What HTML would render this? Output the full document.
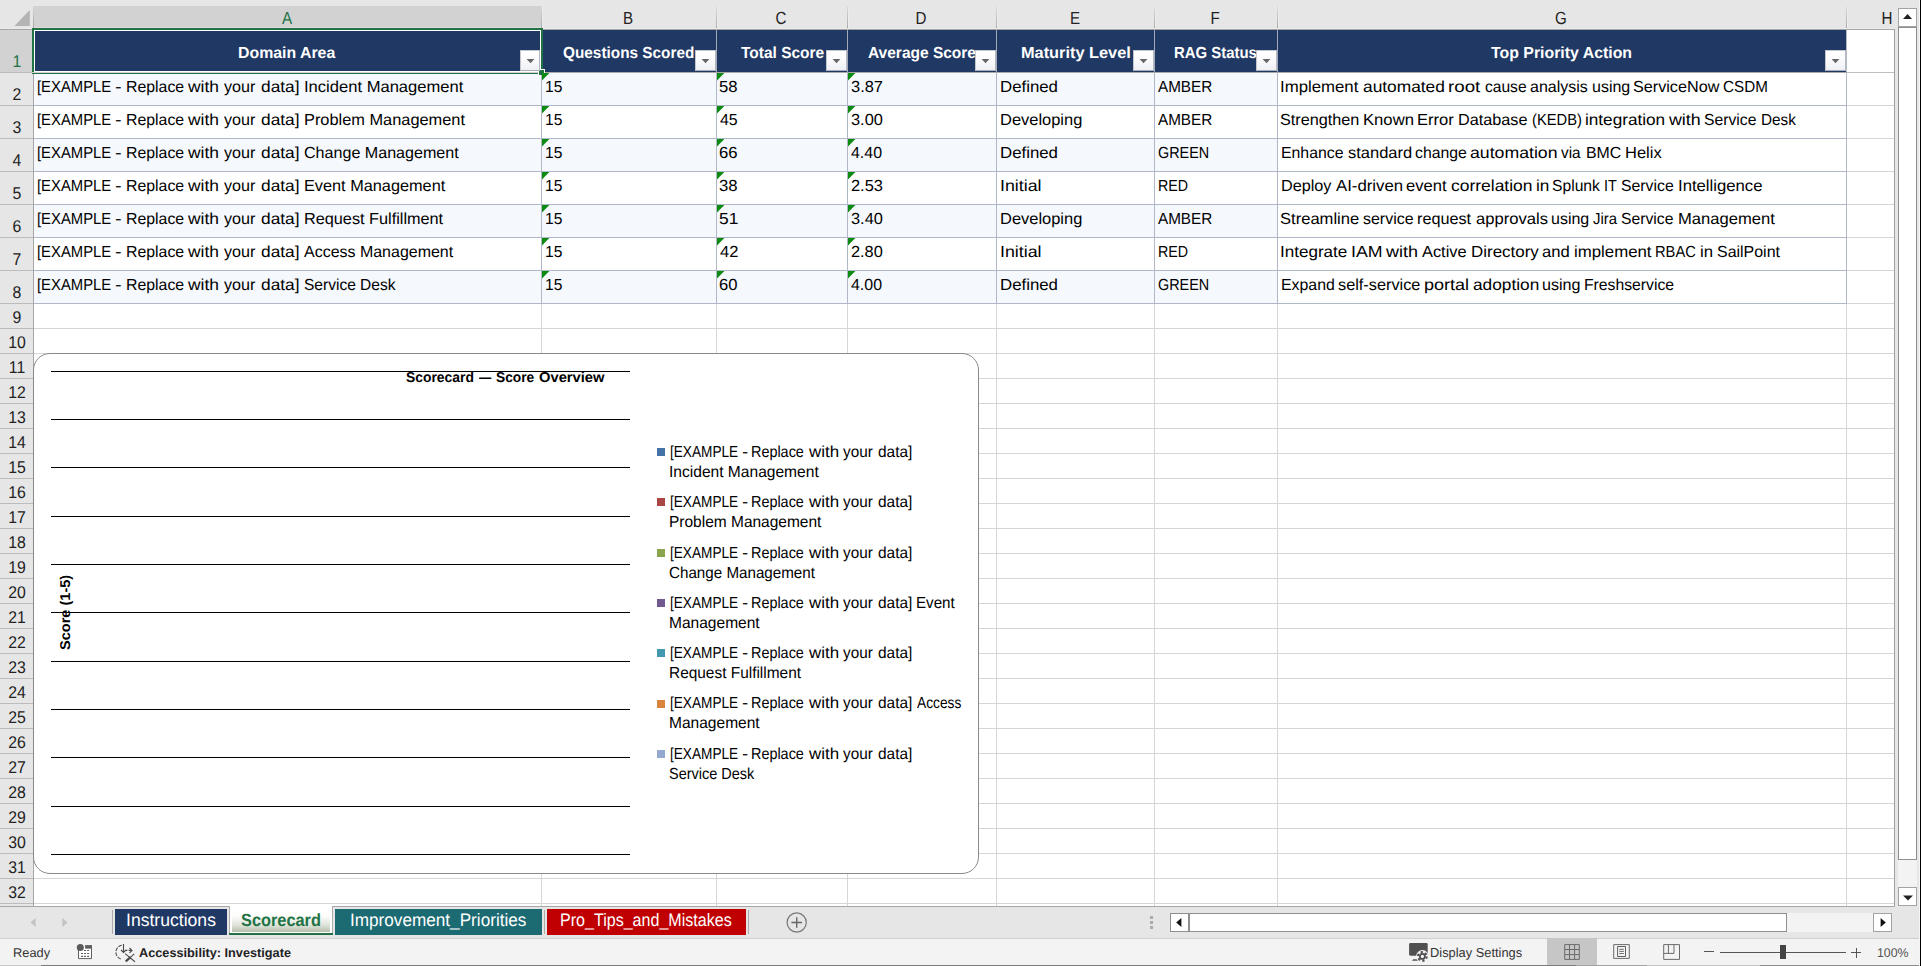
<!DOCTYPE html>
<html lang="en"><head><meta charset="utf-8"><title>Scorecard</title>
<style>
html,body{margin:0;padding:0;}
body{width:1921px;height:966px;overflow:hidden;position:relative;background:#fff;font-family:"Liberation Sans", sans-serif;}
body>div,body>svg,body>span{position:absolute;display:block;}
.t{white-space:nowrap;line-height:1;text-rendering:geometricPrecision;}
</style></head>
<body>
<div style="left:0px;top:0px;width:1921px;height:966px;background:#ffffff;"></div>
<div style="left:0px;top:0px;width:1921px;height:28px;background:#e6e6e6;"></div>
<div style="left:0px;top:28px;width:33px;height:878px;background:#e6e6e6;"></div>
<div style="left:1895px;top:0px;width:26px;height:907px;background:#e6e6e6;"></div>
<div style="left:541px;top:30px;width:1px;height:876px;background:#d6d6d6;"></div>
<div style="left:716px;top:30px;width:1px;height:876px;background:#d6d6d6;"></div>
<div style="left:847px;top:30px;width:1px;height:876px;background:#d6d6d6;"></div>
<div style="left:996px;top:30px;width:1px;height:876px;background:#d6d6d6;"></div>
<div style="left:1154px;top:30px;width:1px;height:876px;background:#d6d6d6;"></div>
<div style="left:1277px;top:30px;width:1px;height:876px;background:#d6d6d6;"></div>
<div style="left:1846px;top:30px;width:1px;height:876px;background:#d6d6d6;"></div>
<div style="left:34px;top:72px;width:1860px;height:1px;background:#d6d6d6;"></div>
<div style="left:34px;top:105px;width:1860px;height:1px;background:#d6d6d6;"></div>
<div style="left:34px;top:138px;width:1860px;height:1px;background:#d6d6d6;"></div>
<div style="left:34px;top:171px;width:1860px;height:1px;background:#d6d6d6;"></div>
<div style="left:34px;top:204px;width:1860px;height:1px;background:#d6d6d6;"></div>
<div style="left:34px;top:237px;width:1860px;height:1px;background:#d6d6d6;"></div>
<div style="left:34px;top:270px;width:1860px;height:1px;background:#d6d6d6;"></div>
<div style="left:34px;top:303px;width:1860px;height:1px;background:#d6d6d6;"></div>
<div style="left:34px;top:328px;width:1860px;height:1px;background:#d6d6d6;"></div>
<div style="left:34px;top:353px;width:1860px;height:1px;background:#d6d6d6;"></div>
<div style="left:34px;top:378px;width:1860px;height:1px;background:#d6d6d6;"></div>
<div style="left:34px;top:403px;width:1860px;height:1px;background:#d6d6d6;"></div>
<div style="left:34px;top:428px;width:1860px;height:1px;background:#d6d6d6;"></div>
<div style="left:34px;top:453px;width:1860px;height:1px;background:#d6d6d6;"></div>
<div style="left:34px;top:478px;width:1860px;height:1px;background:#d6d6d6;"></div>
<div style="left:34px;top:503px;width:1860px;height:1px;background:#d6d6d6;"></div>
<div style="left:34px;top:528px;width:1860px;height:1px;background:#d6d6d6;"></div>
<div style="left:34px;top:553px;width:1860px;height:1px;background:#d6d6d6;"></div>
<div style="left:34px;top:578px;width:1860px;height:1px;background:#d6d6d6;"></div>
<div style="left:34px;top:603px;width:1860px;height:1px;background:#d6d6d6;"></div>
<div style="left:34px;top:628px;width:1860px;height:1px;background:#d6d6d6;"></div>
<div style="left:34px;top:653px;width:1860px;height:1px;background:#d6d6d6;"></div>
<div style="left:34px;top:678px;width:1860px;height:1px;background:#d6d6d6;"></div>
<div style="left:34px;top:703px;width:1860px;height:1px;background:#d6d6d6;"></div>
<div style="left:34px;top:728px;width:1860px;height:1px;background:#d6d6d6;"></div>
<div style="left:34px;top:753px;width:1860px;height:1px;background:#d6d6d6;"></div>
<div style="left:34px;top:778px;width:1860px;height:1px;background:#d6d6d6;"></div>
<div style="left:34px;top:803px;width:1860px;height:1px;background:#d6d6d6;"></div>
<div style="left:34px;top:828px;width:1860px;height:1px;background:#d6d6d6;"></div>
<div style="left:34px;top:853px;width:1860px;height:1px;background:#d6d6d6;"></div>
<div style="left:34px;top:878px;width:1860px;height:1px;background:#d6d6d6;"></div>
<div style="left:34px;top:903px;width:1860px;height:1px;background:#d6d6d6;"></div>
<div style="left:34px;top:73px;width:1243px;height:32px;background:#f5f8fd;"></div>
<div style="left:34px;top:139px;width:1243px;height:32px;background:#f5f8fd;"></div>
<div style="left:34px;top:205px;width:1243px;height:32px;background:#f5f8fd;"></div>
<div style="left:34px;top:271px;width:1243px;height:32px;background:#f5f8fd;"></div>
<div style="left:34px;top:105px;width:1813px;height:1px;background:#b0b7c6;"></div>
<div style="left:34px;top:138px;width:1813px;height:1px;background:#b0b7c6;"></div>
<div style="left:34px;top:171px;width:1813px;height:1px;background:#b0b7c6;"></div>
<div style="left:34px;top:204px;width:1813px;height:1px;background:#b0b7c6;"></div>
<div style="left:34px;top:237px;width:1813px;height:1px;background:#b0b7c6;"></div>
<div style="left:34px;top:270px;width:1813px;height:1px;background:#b0b7c6;"></div>
<div style="left:34px;top:303px;width:1813px;height:1px;background:#b0b7c6;"></div>
<div style="left:541px;top:73px;width:1px;height:231px;background:#b0b7c6;"></div>
<div style="left:716px;top:73px;width:1px;height:231px;background:#b0b7c6;"></div>
<div style="left:847px;top:73px;width:1px;height:231px;background:#b0b7c6;"></div>
<div style="left:996px;top:73px;width:1px;height:231px;background:#b0b7c6;"></div>
<div style="left:1154px;top:73px;width:1px;height:231px;background:#b0b7c6;"></div>
<div style="left:1277px;top:73px;width:1px;height:231px;background:#b0b7c6;"></div>
<div style="left:1846px;top:73px;width:1px;height:231px;background:#b0b7c6;"></div>
<div style="left:34px;top:30px;width:1812px;height:42px;background:#203864;"></div>
<div style="left:541px;top:30px;width:1px;height:42px;background:#a3aaba;"></div>
<div style="left:716px;top:30px;width:1px;height:42px;background:#a3aaba;"></div>
<div style="left:847px;top:30px;width:1px;height:42px;background:#a3aaba;"></div>
<div style="left:996px;top:30px;width:1px;height:42px;background:#a3aaba;"></div>
<div style="left:1154px;top:30px;width:1px;height:42px;background:#a3aaba;"></div>
<div style="left:1277px;top:30px;width:1px;height:42px;background:#a3aaba;"></div>
<div style="left:1846px;top:30px;width:1px;height:42px;background:#b5bac6;"></div>
<div style="left:1847px;top:72px;width:47px;height:1px;background:#bdbdbd;"></div>
<div style="left:34px;top:72px;width:1813px;height:1px;background:#a9a9a9;"></div>
<div style="left:34px;top:6px;width:507px;height:21px;background:#d2d2d2;"></div>
<div style="left:0px;top:30px;width:33px;height:42px;background:#d2d2d2;"></div>
<div style="left:33px;top:6px;width:1px;height:22px;background:linear-gradient(#d6d6d6,#a4a4a4);"></div>
<div style="left:541px;top:6px;width:1px;height:22px;background:linear-gradient(#dcdcdc,#a8a8a8);"></div>
<div style="left:542px;top:6px;width:1px;height:22px;background:linear-gradient(#e9e9e9,#f0f0f0);"></div>
<div style="left:716px;top:6px;width:1px;height:22px;background:linear-gradient(#dcdcdc,#a8a8a8);"></div>
<div style="left:717px;top:6px;width:1px;height:22px;background:linear-gradient(#e9e9e9,#f0f0f0);"></div>
<div style="left:847px;top:6px;width:1px;height:22px;background:linear-gradient(#dcdcdc,#a8a8a8);"></div>
<div style="left:848px;top:6px;width:1px;height:22px;background:linear-gradient(#e9e9e9,#f0f0f0);"></div>
<div style="left:996px;top:6px;width:1px;height:22px;background:linear-gradient(#dcdcdc,#a8a8a8);"></div>
<div style="left:997px;top:6px;width:1px;height:22px;background:linear-gradient(#e9e9e9,#f0f0f0);"></div>
<div style="left:1154px;top:6px;width:1px;height:22px;background:linear-gradient(#dcdcdc,#a8a8a8);"></div>
<div style="left:1155px;top:6px;width:1px;height:22px;background:linear-gradient(#e9e9e9,#f0f0f0);"></div>
<div style="left:1277px;top:6px;width:1px;height:22px;background:linear-gradient(#dcdcdc,#a8a8a8);"></div>
<div style="left:1278px;top:6px;width:1px;height:22px;background:linear-gradient(#e9e9e9,#f0f0f0);"></div>
<div style="left:1846px;top:6px;width:1px;height:22px;background:linear-gradient(#dcdcdc,#a8a8a8);"></div>
<div style="left:1847px;top:6px;width:1px;height:22px;background:linear-gradient(#e9e9e9,#f0f0f0);"></div>
<div style="left:0px;top:28px;width:1895px;height:1px;background:#ebebeb;"></div>
<div style="left:0px;top:29px;width:1895px;height:1px;background:#a6a6a6;"></div>
<div style="left:34px;top:27px;width:507px;height:1px;background:#dcdcdc;"></div>
<div style="left:33px;top:30px;width:1px;height:876px;background:#a6a6a6;"></div>
<div style="left:0px;top:72px;width:33px;height:1px;background:#bcbcbc;"></div>
<div style="left:0px;top:105px;width:33px;height:1px;background:#bcbcbc;"></div>
<div style="left:0px;top:138px;width:33px;height:1px;background:#bcbcbc;"></div>
<div style="left:0px;top:171px;width:33px;height:1px;background:#bcbcbc;"></div>
<div style="left:0px;top:204px;width:33px;height:1px;background:#bcbcbc;"></div>
<div style="left:0px;top:237px;width:33px;height:1px;background:#bcbcbc;"></div>
<div style="left:0px;top:270px;width:33px;height:1px;background:#bcbcbc;"></div>
<div style="left:0px;top:303px;width:33px;height:1px;background:#bcbcbc;"></div>
<div style="left:0px;top:328px;width:33px;height:1px;background:#bcbcbc;"></div>
<div style="left:0px;top:353px;width:33px;height:1px;background:#bcbcbc;"></div>
<div style="left:0px;top:378px;width:33px;height:1px;background:#bcbcbc;"></div>
<div style="left:0px;top:403px;width:33px;height:1px;background:#bcbcbc;"></div>
<div style="left:0px;top:428px;width:33px;height:1px;background:#bcbcbc;"></div>
<div style="left:0px;top:453px;width:33px;height:1px;background:#bcbcbc;"></div>
<div style="left:0px;top:478px;width:33px;height:1px;background:#bcbcbc;"></div>
<div style="left:0px;top:503px;width:33px;height:1px;background:#bcbcbc;"></div>
<div style="left:0px;top:528px;width:33px;height:1px;background:#bcbcbc;"></div>
<div style="left:0px;top:553px;width:33px;height:1px;background:#bcbcbc;"></div>
<div style="left:0px;top:578px;width:33px;height:1px;background:#bcbcbc;"></div>
<div style="left:0px;top:603px;width:33px;height:1px;background:#bcbcbc;"></div>
<div style="left:0px;top:628px;width:33px;height:1px;background:#bcbcbc;"></div>
<div style="left:0px;top:653px;width:33px;height:1px;background:#bcbcbc;"></div>
<div style="left:0px;top:678px;width:33px;height:1px;background:#bcbcbc;"></div>
<div style="left:0px;top:703px;width:33px;height:1px;background:#bcbcbc;"></div>
<div style="left:0px;top:728px;width:33px;height:1px;background:#bcbcbc;"></div>
<div style="left:0px;top:753px;width:33px;height:1px;background:#bcbcbc;"></div>
<div style="left:0px;top:778px;width:33px;height:1px;background:#bcbcbc;"></div>
<div style="left:0px;top:803px;width:33px;height:1px;background:#bcbcbc;"></div>
<div style="left:0px;top:828px;width:33px;height:1px;background:#bcbcbc;"></div>
<div style="left:0px;top:853px;width:33px;height:1px;background:#bcbcbc;"></div>
<div style="left:0px;top:878px;width:33px;height:1px;background:#bcbcbc;"></div>
<div style="left:0px;top:903px;width:33px;height:1px;background:#bcbcbc;"></div>
<div style="left:1894px;top:29px;width:1px;height:878px;background:#a0a0a0;"></div>
<div style="left:0px;top:906px;width:1895px;height:1px;background:#a6a6a6;"></div>
<svg style="left:14px;top:10px" width="17" height="17" viewBox="0 0 17 17"><path d="M15.8 0.1 V15.9 H0.4 Z" fill="#b4b4b4"/></svg>
<div style="left:32px;top:28px;width:511px;height:2px;background:#217346;"></div>
<div style="left:32px;top:28px;width:2px;height:46px;background:#217346;"></div>
<div style="left:541px;top:28px;width:2px;height:42px;background:#217346;"></div>
<div style="left:34px;top:30px;width:507px;height:1px;background:#fff;"></div>
<div style="left:34px;top:30px;width:1px;height:42px;background:#fff;"></div>
<div style="left:540px;top:30px;width:1px;height:41px;background:#fff;"></div>
<div style="left:34px;top:71px;width:507px;height:1px;background:#fff;"></div>
<div style="left:32px;top:72px;width:507px;height:1px;background:#cfcfcf;"></div>
<div style="left:32px;top:73px;width:507px;height:1px;background:#217346;"></div>
<div style="left:34px;top:72px;width:0px;height:0px;background:#217346;"></div>
<div style="left:538px;top:69px;width:7px;height:6px;background:#fff;"></div>
<div style="left:539px;top:70px;width:5px;height:5px;background:#217346;"></div>
<div style="left:33px;top:353px;width:944px;height:519px;background:#fff;border:1px solid #898989;border-radius:17px;"></div>
<div style="left:51px;top:371px;width:579px;height:1px;background:#000;"></div>
<div style="left:51px;top:419px;width:579px;height:1px;background:#000;"></div>
<div style="left:51px;top:467px;width:579px;height:1px;background:#000;"></div>
<div style="left:51px;top:516px;width:579px;height:1px;background:#000;"></div>
<div style="left:51px;top:564px;width:579px;height:1px;background:#000;"></div>
<div style="left:51px;top:612px;width:579px;height:1px;background:#000;"></div>
<div style="left:51px;top:661px;width:579px;height:1px;background:#000;"></div>
<div style="left:51px;top:709px;width:579px;height:1px;background:#000;"></div>
<div style="left:51px;top:757px;width:579px;height:1px;background:#000;"></div>
<div style="left:51px;top:806px;width:579px;height:1px;background:#000;"></div>
<div style="left:51px;top:854px;width:579px;height:1px;background:#000;"></div>
<div style="left:657px;top:448px;width:8px;height:8px;background:#4572A7;"></div>
<div style="left:657px;top:498px;width:8px;height:8px;background:#AA4643;"></div>
<div style="left:657px;top:549px;width:8px;height:8px;background:#89A54E;"></div>
<div style="left:657px;top:599px;width:8px;height:8px;background:#71588F;"></div>
<div style="left:657px;top:649px;width:8px;height:8px;background:#4198AF;"></div>
<div style="left:657px;top:700px;width:8px;height:8px;background:#DB843D;"></div>
<div style="left:657px;top:750px;width:8px;height:8px;background:#93A9CF;"></div>
<div style="left:0px;top:907px;width:1921px;height:31px;background:#e6e6e6;"></div>
<div style="left:0px;top:938px;width:1921px;height:1px;background:#cfcfcf;"></div>
<div style="left:0px;top:939px;width:1921px;height:27px;background:#f3f3f3;"></div>
<div style="left:1898px;top:27px;width:19px;height:861px;background:#f3f3f3;"></div>
<div style="left:1898px;top:8px;width:19px;height:19px;background:#fff;box-sizing:border-box;border:1px solid #a3a3a3;"></div>
<svg style="left:1903px;top:13px" width="10" height="7" viewBox="0 0 10 7"><path d="M0 6.1 L4.55 1 L9.1 6.1 Z" fill="#222"/></svg>
<div style="left:1898px;top:27px;width:19px;height:833px;background:#fff;box-sizing:border-box;border:1px solid #8f8f8f;"></div>
<div style="left:1898px;top:887px;width:19px;height:19px;background:#fff;box-sizing:border-box;border:1px solid #a3a3a3;"></div>
<svg style="left:1903px;top:895px" width="10" height="6" viewBox="0 0 10 6"><path d="M0 0.4 L10 0.4 L5 5.6 Z" fill="#222"/></svg>
<svg style="left:30px;top:918px" width="6" height="9" viewBox="0 0 6 9"><path d="M5.6 0 V9 L0.4 4.5 Z" fill="#c3c3c3"/></svg>
<svg style="left:62px;top:918px" width="6" height="9" viewBox="0 0 6 9"><path d="M0.4 0 V9 L5.6 4.5 Z" fill="#c3c3c3"/></svg>
<div style="left:112px;top:910px;width:1px;height:24px;background:#ababab;"></div>
<div style="left:115px;top:909px;width:112px;height:26px;background:#203864;"></div>
<div style="left:229px;top:906px;width:1px;height:29px;background:#ababab;"></div>
<div style="left:332px;top:906px;width:1px;height:29px;background:#ababab;"></div>
<div style="left:230px;top:906px;width:102px;height:27px;background:#fff;"></div>
<div style="left:232px;top:909px;width:98px;height:23px;background:linear-gradient(#ffffff 0%,#fdfdfc 30%,#dfe4da 70%,#b5bfac 100%);"></div>
<div style="left:229px;top:933px;width:104px;height:2px;background:#217346;"></div>
<div style="left:335px;top:909px;width:207px;height:26px;background:#1c6a72;"></div>
<div style="left:544px;top:910px;width:1px;height:24px;background:#ababab;"></div>
<div style="left:547px;top:909px;width:199px;height:26px;background:#c00000;"></div>
<div style="left:748px;top:910px;width:1px;height:24px;background:#ababab;"></div>
<svg style="left:785px;top:911px" width="24" height="24" viewBox="0 0 24 24"><circle cx="11.7" cy="11.5" r="9.6" fill="none" stroke="#777" stroke-width="1.2"/><path d="M11.7 6.2 V16.8 M6.4 11.5 H17" stroke="#666" stroke-width="1.4" fill="none"/></svg>
<div style="left:1150px;top:916px;width:3px;height:3px;background:#ababab;"></div>
<div style="left:1150px;top:921px;width:3px;height:3px;background:#ababab;"></div>
<div style="left:1150px;top:926px;width:3px;height:3px;background:#ababab;"></div>
<div style="left:1170px;top:913px;width:722px;height:19px;background:#f3f3f3;"></div>
<div style="left:1170px;top:913px;width:19px;height:19px;background:#fff;box-sizing:border-box;border:1px solid #8f8f8f;"></div>
<svg style="left:1176px;top:918px" width="6" height="9" viewBox="0 0 6 9"><path d="M5.4 0 V9 L0.2 4.5 Z" fill="#111"/></svg>
<div style="left:1189px;top:913px;width:598px;height:19px;background:#fff;box-sizing:border-box;border:1px solid #8f8f8f;"></div>
<div style="left:1873px;top:913px;width:19px;height:19px;background:#fff;box-sizing:border-box;border:1px solid #a3a3a3;"></div>
<svg style="left:1880px;top:918px" width="6" height="9" viewBox="0 0 6 9"><path d="M0.6 0 V9 L5.8 4.5 Z" fill="#111"/></svg>
<svg style="left:76px;top:943px" width="18" height="18" viewBox="0 0 18 18"><rect x="3" y="5.6" width="12" height="10" fill="#fff"/><path d="M2.5 6 V15.6 H15.5 V2.6" fill="none" stroke="#5e5e5e" stroke-width="1"/><rect x="9.1" y="2.1" width="6.9" height="3.5" fill="#5e5e5e"/><circle cx="4.3" cy="4.4" r="3.5" fill="#5a5a5a"/><path d="M8 7.5 h2 M11.1 7.5 h2 M5 10.5 h2 M8 10.5 h2 M11.1 10.5 h2 M5 13.4 h2 M8 13.4 h2 M11.1 13.4 h2" stroke="#5e5e5e" stroke-width="1.1"/></svg>
<svg style="left:114px;top:942px" width="23" height="22" viewBox="0 0 23 22"><path d="M7.77 3.21 A7.1 7.1 0 0 0 7.77 17.19" fill="none" stroke="#555" stroke-width="1.1" stroke-dasharray="3.7 1.2"/><path d="M9.5 2 V10.2 M7 8 L9.5 10.5 L12 8" fill="none" stroke="#4a4a4a" stroke-width="1.1"/><path d="M11.6 8.4 H13.4 M14.6 8.4 H17.8 M15.5 6 L18 8.4 L15.5 10.9" fill="none" stroke="#4a4a4a" stroke-width="1.1"/><path d="M11.1 11.6 L21 19.7 M20.3 11.9 L16 15.6" fill="none" stroke="#4a4a4a" stroke-width="1.1"/><path d="M16.6 15.1 L11.7 19.3" fill="none" stroke="#4a4a4a" stroke-width="2.2"/></svg>
<svg style="left:1408px;top:942px" width="22" height="22" viewBox="0 0 22 22"><rect x="1.1" y="1.1" width="18.6" height="12.6" rx="1.4" fill="#505050"/><path d="M5.2 17.2 H9.8 V18.8 H4 Z" fill="#505050"/><circle cx="14.4" cy="14.4" r="6.3" fill="#f3f3f3"/><circle cx="14.4" cy="14.4" r="3.4" fill="#505050"/><circle cx="14.4" cy="14.4" r="4.3" fill="none" stroke="#505050" stroke-width="2.1" stroke-dasharray="2.25 2.25"/><circle cx="14.4" cy="14.4" r="1.6" fill="#fafafa"/></svg>
<div style="left:1547px;top:938px;width:50px;height:28px;background:#c6c6c6;"></div>
<svg style="left:1564px;top:944px" width="17" height="17" viewBox="0 0 17 17"><path d="M0.7 0.6 H15.3 V15.4 H0.7 Z M5.5 0.6 V15.4 M10.6 0.6 V15.4 M0.7 5.5 H15.3 M0.7 10.6 H15.3" fill="none" stroke="#6a6a6a" stroke-width="1"/></svg>
<svg style="left:1613px;top:944px" width="18" height="16" viewBox="0 0 18 16"><path d="M0.7 0.6 H16.3 V14.4 H0.7 Z" fill="none" stroke="#6a6a6a" stroke-width="1"/><path d="M4.6 2.5 H12.5 V12.5 H4.6 Z" fill="none" stroke="#606060" stroke-width="1"/><path d="M6.3 5.3 H10.9 M6.3 7.4 H10.9 M6.3 9.5 H10.9" fill="none" stroke="#606060" stroke-width="0.9"/></svg>
<svg style="left:1663px;top:944px" width="18" height="17" viewBox="0 0 18 17"><path d="M0.7 0.6 H16.5 V15.4 H0.7 Z M0.7 9.4 H11 M5.4 0.6 V9.4 M11 0.6 V9.4" fill="none" stroke="#6a6a6a" stroke-width="1"/></svg>
<div style="left:1704px;top:951px;width:10px;height:1px;background:#555;"></div>
<div style="left:1720px;top:952px;width:126px;height:1px;background:#555;"></div>
<div style="left:1780px;top:945px;width:6px;height:14px;background:#444;"></div>
<div style="left:1851px;top:952px;width:10px;height:1px;background:#555;"></div>
<div style="left:1855.5px;top:947.5px;width:1px;height:10px;background:#555;"></div>
<div style="left:0px;top:965px;width:41px;height:1px;background:#c9c9c9;"></div>
<div style="left:41px;top:965px;width:1535px;height:1px;background:#7d7d7d;"></div>
<div style="left:1576px;top:965px;width:71px;height:1px;background:#a3a3a3;"></div>
<div style="left:1647px;top:965px;width:113px;height:1px;background:#c4c4c4;"></div>
<div style="left:1760px;top:965px;width:159px;height:1px;background:#8a8a8a;"></div>
<div style="left:1919px;top:0px;width:1px;height:965px;background:#f5f5f5;"></div>
<div style="left:1920px;top:0px;width:1px;height:966px;background:#000;"></div>
<span class="t" style="font-size:17.6px;color:#217346;left:286.90px;top:10px;transform-origin:0 50%;transform:scaleX(0.8600) translateX(-50%);">A</span>
<span class="t" style="font-size:17.6px;color:#222;left:628.40px;top:10px;transform-origin:0 50%;transform:scaleX(0.8600) translateX(-50%);">B</span>
<span class="t" style="font-size:17.6px;color:#222;left:781.40px;top:10px;transform-origin:0 50%;transform:scaleX(0.8600) translateX(-50%);">C</span>
<span class="t" style="font-size:17.6px;color:#222;left:921.40px;top:10px;transform-origin:0 50%;transform:scaleX(0.8600) translateX(-50%);">D</span>
<span class="t" style="font-size:17.6px;color:#222;left:1074.90px;top:10px;transform-origin:0 50%;transform:scaleX(0.8600) translateX(-50%);">E</span>
<span class="t" style="font-size:17.6px;color:#222;left:1215.40px;top:10px;transform-origin:0 50%;transform:scaleX(0.8600) translateX(-50%);">F</span>
<span class="t" style="font-size:17.6px;color:#222;left:1561.40px;top:10px;transform-origin:0 50%;transform:scaleX(0.8600) translateX(-50%);">G</span>
<span class="t" style="font-size:17.6px;color:#222;left:1887.20px;top:10px;transform-origin:0 50%;transform:scaleX(0.8600) translateX(-50%);">H</span>
<span class="t" style="font-size:17px;color:#217346;left:16.60px;top:53px;transform-origin:0 50%;transform:scaleX(0.9300) translateX(-50%);">1</span>
<span class="t" style="font-size:17px;color:#222;left:16.60px;top:86px;transform-origin:0 50%;transform:scaleX(0.9300) translateX(-50%);">2</span>
<span class="t" style="font-size:17px;color:#222;left:16.60px;top:119px;transform-origin:0 50%;transform:scaleX(0.9300) translateX(-50%);">3</span>
<span class="t" style="font-size:17px;color:#222;left:16.60px;top:152px;transform-origin:0 50%;transform:scaleX(0.9300) translateX(-50%);">4</span>
<span class="t" style="font-size:17px;color:#222;left:16.60px;top:185px;transform-origin:0 50%;transform:scaleX(0.9300) translateX(-50%);">5</span>
<span class="t" style="font-size:17px;color:#222;left:16.60px;top:218px;transform-origin:0 50%;transform:scaleX(0.9300) translateX(-50%);">6</span>
<span class="t" style="font-size:17px;color:#222;left:16.60px;top:251px;transform-origin:0 50%;transform:scaleX(0.9300) translateX(-50%);">7</span>
<span class="t" style="font-size:17px;color:#222;left:16.60px;top:284px;transform-origin:0 50%;transform:scaleX(0.9300) translateX(-50%);">8</span>
<span class="t" style="font-size:17px;color:#222;left:16.60px;top:309px;transform-origin:0 50%;transform:scaleX(0.9300) translateX(-50%);">9</span>
<span class="t" style="font-size:17px;color:#222;left:16.60px;top:334px;transform-origin:0 50%;transform:scaleX(0.9300) translateX(-50%);">10</span>
<span class="t" style="font-size:17px;color:#222;left:16.60px;top:359px;transform-origin:0 50%;transform:scaleX(0.9300) translateX(-50%);">11</span>
<span class="t" style="font-size:17px;color:#222;left:16.60px;top:384px;transform-origin:0 50%;transform:scaleX(0.9300) translateX(-50%);">12</span>
<span class="t" style="font-size:17px;color:#222;left:16.60px;top:409px;transform-origin:0 50%;transform:scaleX(0.9300) translateX(-50%);">13</span>
<span class="t" style="font-size:17px;color:#222;left:16.60px;top:434px;transform-origin:0 50%;transform:scaleX(0.9300) translateX(-50%);">14</span>
<span class="t" style="font-size:17px;color:#222;left:16.60px;top:459px;transform-origin:0 50%;transform:scaleX(0.9300) translateX(-50%);">15</span>
<span class="t" style="font-size:17px;color:#222;left:16.60px;top:484px;transform-origin:0 50%;transform:scaleX(0.9300) translateX(-50%);">16</span>
<span class="t" style="font-size:17px;color:#222;left:16.60px;top:509px;transform-origin:0 50%;transform:scaleX(0.9300) translateX(-50%);">17</span>
<span class="t" style="font-size:17px;color:#222;left:16.60px;top:534px;transform-origin:0 50%;transform:scaleX(0.9300) translateX(-50%);">18</span>
<span class="t" style="font-size:17px;color:#222;left:16.60px;top:559px;transform-origin:0 50%;transform:scaleX(0.9300) translateX(-50%);">19</span>
<span class="t" style="font-size:17px;color:#222;left:16.60px;top:584px;transform-origin:0 50%;transform:scaleX(0.9300) translateX(-50%);">20</span>
<span class="t" style="font-size:17px;color:#222;left:16.60px;top:609px;transform-origin:0 50%;transform:scaleX(0.9300) translateX(-50%);">21</span>
<span class="t" style="font-size:17px;color:#222;left:16.60px;top:634px;transform-origin:0 50%;transform:scaleX(0.9300) translateX(-50%);">22</span>
<span class="t" style="font-size:17px;color:#222;left:16.60px;top:659px;transform-origin:0 50%;transform:scaleX(0.9300) translateX(-50%);">23</span>
<span class="t" style="font-size:17px;color:#222;left:16.60px;top:684px;transform-origin:0 50%;transform:scaleX(0.9300) translateX(-50%);">24</span>
<span class="t" style="font-size:17px;color:#222;left:16.60px;top:709px;transform-origin:0 50%;transform:scaleX(0.9300) translateX(-50%);">25</span>
<span class="t" style="font-size:17px;color:#222;left:16.60px;top:734px;transform-origin:0 50%;transform:scaleX(0.9300) translateX(-50%);">26</span>
<span class="t" style="font-size:17px;color:#222;left:16.60px;top:759px;transform-origin:0 50%;transform:scaleX(0.9300) translateX(-50%);">27</span>
<span class="t" style="font-size:17px;color:#222;left:16.60px;top:784px;transform-origin:0 50%;transform:scaleX(0.9300) translateX(-50%);">28</span>
<span class="t" style="font-size:17px;color:#222;left:16.60px;top:809px;transform-origin:0 50%;transform:scaleX(0.9300) translateX(-50%);">29</span>
<span class="t" style="font-size:17px;color:#222;left:16.60px;top:834px;transform-origin:0 50%;transform:scaleX(0.9300) translateX(-50%);">30</span>
<span class="t" style="font-size:17px;color:#222;left:16.60px;top:859px;transform-origin:0 50%;transform:scaleX(0.9300) translateX(-50%);">31</span>
<span class="t" style="font-size:17px;color:#222;left:16.60px;top:884px;transform-origin:0 50%;transform:scaleX(0.9300) translateX(-50%);">32</span>
<span class="t" style="font-size:16px;color:#fff;font-weight:bold;left:237.67px;top:46px;transform-origin:0 50%;transform:scaleX(0.9914);">Domain Area</span>
<span class="t" style="font-size:16px;color:#fff;font-weight:bold;left:562.87px;top:46px;transform-origin:0 50%;transform:scaleX(0.9594);">Questions Scored</span>
<span class="t" style="font-size:16px;color:#fff;font-weight:bold;left:740.67px;top:46px;transform-origin:0 50%;transform:scaleX(0.9676);">Total Score</span>
<span class="t" style="font-size:16px;color:#fff;font-weight:bold;left:868.00px;top:46px;transform-origin:0 50%;transform:scaleX(0.9683);">Average Score</span>
<span class="t" style="font-size:16px;color:#fff;font-weight:bold;left:1020.79px;top:46px;transform-origin:0 50%;transform:scaleX(1.0205);">Maturity Level</span>
<span class="t" style="font-size:16px;color:#fff;font-weight:bold;left:1173.68px;top:46px;transform-origin:0 50%;transform:scaleX(0.9318);">RAG Status</span>
<span class="t" style="font-size:16px;color:#fff;font-weight:bold;left:1490.87px;top:46px;transform-origin:0 50%;transform:scaleX(0.9918);">Top Priority Action</span>
<span class="t" style="font-size:16px;color:#000;left:37.37px;top:80px;transform-origin:0 50%;transform:scaleX(0.9267);">[EXAMPLE</span>
<span class="t" style="font-size:16px;color:#000;left:115.08px;top:80px;transform-origin:0 50%;transform:scaleX(1.2341);">-</span>
<span class="t" style="font-size:16px;color:#000;left:125.63px;top:80px;transform-origin:0 50%;transform:scaleX(0.9901);">Replace</span>
<span class="t" style="font-size:16px;color:#000;left:188.33px;top:80px;transform-origin:0 50%;transform:scaleX(1.0883);">with</span>
<span class="t" style="font-size:16px;color:#000;left:223.86px;top:80px;transform-origin:0 50%;transform:scaleX(1.0069);">your</span>
<span class="t" style="font-size:16px;color:#000;left:261.21px;top:80px;transform-origin:0 50%;transform:scaleX(1.0825);">data]</span>
<span class="t" style="font-size:16px;color:#000;left:304.20px;top:80px;transform-origin:0 50%;transform:scaleX(1.0356);">Incident Management</span>
<span class="t" style="font-size:16px;color:#000;left:544.99px;top:80px;transform-origin:0 50%;transform:scaleX(0.9747);">15</span>
<span class="t" style="font-size:16px;color:#000;left:719.39px;top:80px;transform-origin:0 50%;transform:scaleX(1.0433);">58</span>
<span class="t" style="font-size:16px;color:#000;left:850.59px;top:80px;transform-origin:0 50%;transform:scaleX(1.0255);">3.87</span>
<span class="t" style="font-size:16px;color:#000;left:999.66px;top:80px;transform-origin:0 50%;transform:scaleX(1.0511);">Defined</span>
<span class="t" style="font-size:16px;color:#000;left:1158.25px;top:80px;transform-origin:0 50%;transform:scaleX(0.9530);">AMBER</span>
<span class="t" style="font-size:16px;color:#000;left:1280.49px;top:80px;transform-origin:0 50%;transform:scaleX(1.0490);">Implement</span>
<span class="t" style="font-size:16px;color:#000;left:1363.29px;top:80px;transform-origin:0 50%;transform:scaleX(1.0826);">automated</span>
<span class="t" style="font-size:16px;color:#000;left:1447.90px;top:80px;transform-origin:0 50%;transform:scaleX(1.1697);">root</span>
<span class="t" style="font-size:16px;color:#000;left:1484.99px;top:80px;transform-origin:0 50%;transform:scaleX(0.9737);">cause</span>
<span class="t" style="font-size:16px;color:#000;left:1530.22px;top:80px;transform-origin:0 50%;transform:scaleX(1.0011);">analysis</span>
<span class="t" style="font-size:16px;color:#000;left:1591.58px;top:80px;transform-origin:0 50%;transform:scaleX(0.9995);">using</span>
<span class="t" style="font-size:16px;color:#000;left:1632.87px;top:80px;transform-origin:0 50%;transform:scaleX(1.0112);">ServiceNow</span>
<span class="t" style="font-size:16px;color:#000;left:1723.48px;top:80px;transform-origin:0 50%;transform:scaleX(0.9511);">CSDM</span>
<span class="t" style="font-size:16px;color:#000;left:37.37px;top:113px;transform-origin:0 50%;transform:scaleX(0.9267);">[EXAMPLE</span>
<span class="t" style="font-size:16px;color:#000;left:115.08px;top:113px;transform-origin:0 50%;transform:scaleX(1.2341);">-</span>
<span class="t" style="font-size:16px;color:#000;left:125.63px;top:113px;transform-origin:0 50%;transform:scaleX(0.9901);">Replace</span>
<span class="t" style="font-size:16px;color:#000;left:188.33px;top:113px;transform-origin:0 50%;transform:scaleX(1.0883);">with</span>
<span class="t" style="font-size:16px;color:#000;left:223.86px;top:113px;transform-origin:0 50%;transform:scaleX(1.0069);">your</span>
<span class="t" style="font-size:16px;color:#000;left:261.21px;top:113px;transform-origin:0 50%;transform:scaleX(1.0825);">data]</span>
<span class="t" style="font-size:16px;color:#000;left:304.29px;top:113px;transform-origin:0 50%;transform:scaleX(1.0228);">Problem Management</span>
<span class="t" style="font-size:16px;color:#000;left:544.99px;top:113px;transform-origin:0 50%;transform:scaleX(0.9747);">15</span>
<span class="t" style="font-size:16px;color:#000;left:720.25px;top:113px;transform-origin:0 50%;transform:scaleX(0.9936);">45</span>
<span class="t" style="font-size:16px;color:#000;left:850.60px;top:113px;transform-origin:0 50%;transform:scaleX(1.0227);">3.00</span>
<span class="t" style="font-size:16px;color:#000;left:999.69px;top:113px;transform-origin:0 50%;transform:scaleX(1.0283);">Developing</span>
<span class="t" style="font-size:16px;color:#000;left:1158.25px;top:113px;transform-origin:0 50%;transform:scaleX(0.9530);">AMBER</span>
<span class="t" style="font-size:16px;color:#000;left:1280.15px;top:113px;transform-origin:0 50%;transform:scaleX(1.0142);">Strengthen</span>
<span class="t" style="font-size:16px;color:#000;left:1363.19px;top:113px;transform-origin:0 50%;transform:scaleX(1.0407);">Known</span>
<span class="t" style="font-size:16px;color:#000;left:1417.27px;top:113px;transform-origin:0 50%;transform:scaleX(1.0328);">Error</span>
<span class="t" style="font-size:16px;color:#000;left:1458.33px;top:113px;transform-origin:0 50%;transform:scaleX(1.0147);">Database</span>
<span class="t" style="font-size:16px;color:#000;left:1531.63px;top:113px;transform-origin:0 50%;transform:scaleX(0.9191);">(KEDB)</span>
<span class="t" style="font-size:16px;color:#000;left:1584.71px;top:113px;transform-origin:0 50%;transform:scaleX(1.0721);">integration</span>
<span class="t" style="font-size:16px;color:#000;left:1669.13px;top:113px;transform-origin:0 50%;transform:scaleX(1.1139);">with</span>
<span class="t" style="font-size:16px;color:#000;left:1704.37px;top:113px;transform-origin:0 50%;transform:scaleX(0.9817);">Service</span>
<span class="t" style="font-size:16px;color:#000;left:1760.57px;top:113px;transform-origin:0 50%;transform:scaleX(0.9574);">Desk</span>
<span class="t" style="font-size:16px;color:#000;left:37.37px;top:146px;transform-origin:0 50%;transform:scaleX(0.9267);">[EXAMPLE</span>
<span class="t" style="font-size:16px;color:#000;left:115.08px;top:146px;transform-origin:0 50%;transform:scaleX(1.2341);">-</span>
<span class="t" style="font-size:16px;color:#000;left:125.63px;top:146px;transform-origin:0 50%;transform:scaleX(0.9901);">Replace</span>
<span class="t" style="font-size:16px;color:#000;left:188.33px;top:146px;transform-origin:0 50%;transform:scaleX(1.0883);">with</span>
<span class="t" style="font-size:16px;color:#000;left:223.86px;top:146px;transform-origin:0 50%;transform:scaleX(1.0069);">your</span>
<span class="t" style="font-size:16px;color:#000;left:261.21px;top:146px;transform-origin:0 50%;transform:scaleX(1.0825);">data]</span>
<span class="t" style="font-size:16px;color:#000;left:303.65px;top:146px;transform-origin:0 50%;transform:scaleX(1.0054);">Change Management</span>
<span class="t" style="font-size:16px;color:#000;left:544.99px;top:146px;transform-origin:0 50%;transform:scaleX(0.9747);">15</span>
<span class="t" style="font-size:16px;color:#000;left:719.43px;top:146px;transform-origin:0 50%;transform:scaleX(1.0406);">66</span>
<span class="t" style="font-size:16px;color:#000;left:851.45px;top:146px;transform-origin:0 50%;transform:scaleX(0.9949);">4.40</span>
<span class="t" style="font-size:16px;color:#000;left:999.66px;top:146px;transform-origin:0 50%;transform:scaleX(1.0511);">Defined</span>
<span class="t" style="font-size:16px;color:#000;left:1157.76px;top:146px;transform-origin:0 50%;transform:scaleX(0.8986);">GREEN</span>
<span class="t" style="font-size:16px;color:#000;left:1280.64px;top:146px;transform-origin:0 50%;transform:scaleX(0.9887);">Enhance</span>
<span class="t" style="font-size:16px;color:#000;left:1347.50px;top:146px;transform-origin:0 50%;transform:scaleX(1.0306);">standard</span>
<span class="t" style="font-size:16px;color:#000;left:1414.88px;top:146px;transform-origin:0 50%;transform:scaleX(0.9867);">change</span>
<span class="t" style="font-size:16px;color:#000;left:1470.33px;top:146px;transform-origin:0 50%;transform:scaleX(1.1058);">automation</span>
<span class="t" style="font-size:16px;color:#000;left:1561.20px;top:146px;transform-origin:0 50%;transform:scaleX(0.9552);">via</span>
<span class="t" style="font-size:16px;color:#000;left:1585.80px;top:146px;transform-origin:0 50%;transform:scaleX(0.9923);">BMC</span>
<span class="t" style="font-size:16px;color:#000;left:1624.61px;top:146px;transform-origin:0 50%;transform:scaleX(1.0304);">Helix</span>
<span class="t" style="font-size:16px;color:#000;left:37.37px;top:179px;transform-origin:0 50%;transform:scaleX(0.9267);">[EXAMPLE</span>
<span class="t" style="font-size:16px;color:#000;left:115.08px;top:179px;transform-origin:0 50%;transform:scaleX(1.2341);">-</span>
<span class="t" style="font-size:16px;color:#000;left:125.63px;top:179px;transform-origin:0 50%;transform:scaleX(0.9901);">Replace</span>
<span class="t" style="font-size:16px;color:#000;left:188.33px;top:179px;transform-origin:0 50%;transform:scaleX(1.0883);">with</span>
<span class="t" style="font-size:16px;color:#000;left:223.86px;top:179px;transform-origin:0 50%;transform:scaleX(1.0069);">your</span>
<span class="t" style="font-size:16px;color:#000;left:261.21px;top:179px;transform-origin:0 50%;transform:scaleX(1.0825);">data]</span>
<span class="t" style="font-size:16px;color:#000;left:304.30px;top:179px;transform-origin:0 50%;transform:scaleX(1.0178);">Event Management</span>
<span class="t" style="font-size:16px;color:#000;left:544.99px;top:179px;transform-origin:0 50%;transform:scaleX(0.9747);">15</span>
<span class="t" style="font-size:16px;color:#000;left:719.37px;top:179px;transform-origin:0 50%;transform:scaleX(1.0443);">38</span>
<span class="t" style="font-size:16px;color:#000;left:850.65px;top:179px;transform-origin:0 50%;transform:scaleX(1.0230);">2.53</span>
<span class="t" style="font-size:16px;color:#000;left:999.51px;top:179px;transform-origin:0 50%;transform:scaleX(1.1126);">Initial</span>
<span class="t" style="font-size:16px;color:#000;left:1157.95px;top:179px;transform-origin:0 50%;transform:scaleX(0.8904);">RED</span>
<span class="t" style="font-size:16px;color:#000;left:1280.61px;top:179px;transform-origin:0 50%;transform:scaleX(1.0134);">Deploy</span>
<span class="t" style="font-size:16px;color:#000;left:1335.71px;top:179px;transform-origin:0 50%;transform:scaleX(1.0472);">AI-driven</span>
<span class="t" style="font-size:16px;color:#000;left:1406.16px;top:179px;transform-origin:0 50%;transform:scaleX(1.0343);">event</span>
<span class="t" style="font-size:16px;color:#000;left:1450.98px;top:179px;transform-origin:0 50%;transform:scaleX(1.0910);">correlation</span>
<span class="t" style="font-size:16px;color:#000;left:1535.80px;top:179px;transform-origin:0 50%;transform:scaleX(1.0733);">in</span>
<span class="t" style="font-size:16px;color:#000;left:1552.20px;top:179px;transform-origin:0 50%;transform:scaleX(0.9789);">Splunk</span>
<span class="t" style="font-size:16px;color:#000;left:1604.32px;top:179px;transform-origin:0 50%;transform:scaleX(0.8995);">IT</span>
<span class="t" style="font-size:16px;color:#000;left:1621.21px;top:179px;transform-origin:0 50%;transform:scaleX(0.9870);">Service</span>
<span class="t" style="font-size:16px;color:#000;left:1677.51px;top:179px;transform-origin:0 50%;transform:scaleX(1.0439);">Intelligence</span>
<span class="t" style="font-size:16px;color:#000;left:37.37px;top:212px;transform-origin:0 50%;transform:scaleX(0.9267);">[EXAMPLE</span>
<span class="t" style="font-size:16px;color:#000;left:115.08px;top:212px;transform-origin:0 50%;transform:scaleX(1.2341);">-</span>
<span class="t" style="font-size:16px;color:#000;left:125.63px;top:212px;transform-origin:0 50%;transform:scaleX(0.9901);">Replace</span>
<span class="t" style="font-size:16px;color:#000;left:188.33px;top:212px;transform-origin:0 50%;transform:scaleX(1.0883);">with</span>
<span class="t" style="font-size:16px;color:#000;left:223.86px;top:212px;transform-origin:0 50%;transform:scaleX(1.0069);">your</span>
<span class="t" style="font-size:16px;color:#000;left:261.21px;top:212px;transform-origin:0 50%;transform:scaleX(1.0825);">data]</span>
<span class="t" style="font-size:16px;color:#000;left:304.30px;top:212px;transform-origin:0 50%;transform:scaleX(1.0159);">Request Fulfillment</span>
<span class="t" style="font-size:16px;color:#000;left:544.99px;top:212px;transform-origin:0 50%;transform:scaleX(0.9747);">15</span>
<span class="t" style="font-size:16px;color:#000;left:719.34px;top:212px;transform-origin:0 50%;transform:scaleX(1.0868);">51</span>
<span class="t" style="font-size:16px;color:#000;left:850.60px;top:212px;transform-origin:0 50%;transform:scaleX(1.0227);">3.40</span>
<span class="t" style="font-size:16px;color:#000;left:999.69px;top:212px;transform-origin:0 50%;transform:scaleX(1.0283);">Developing</span>
<span class="t" style="font-size:16px;color:#000;left:1158.25px;top:212px;transform-origin:0 50%;transform:scaleX(0.9530);">AMBER</span>
<span class="t" style="font-size:16px;color:#000;left:1280.12px;top:212px;transform-origin:0 50%;transform:scaleX(1.0359);">Streamline</span>
<span class="t" style="font-size:16px;color:#000;left:1363.27px;top:212px;transform-origin:0 50%;transform:scaleX(0.9969);">service</span>
<span class="t" style="font-size:16px;color:#000;left:1417.37px;top:212px;transform-origin:0 50%;transform:scaleX(1.0125);">request</span>
<span class="t" style="font-size:16px;color:#000;left:1476.11px;top:212px;transform-origin:0 50%;transform:scaleX(1.0367);">approvals</span>
<span class="t" style="font-size:16px;color:#000;left:1551.37px;top:212px;transform-origin:0 50%;transform:scaleX(0.9995);">using</span>
<span class="t" style="font-size:16px;color:#000;left:1592.98px;top:212px;transform-origin:0 50%;transform:scaleX(0.9323);">Jira</span>
<span class="t" style="font-size:16px;color:#000;left:1621.49px;top:212px;transform-origin:0 50%;transform:scaleX(0.9817);">Service</span>
<span class="t" style="font-size:16px;color:#000;left:1677.59px;top:212px;transform-origin:0 50%;transform:scaleX(1.0366);">Management</span>
<span class="t" style="font-size:16px;color:#000;left:37.37px;top:245px;transform-origin:0 50%;transform:scaleX(0.9267);">[EXAMPLE</span>
<span class="t" style="font-size:16px;color:#000;left:115.08px;top:245px;transform-origin:0 50%;transform:scaleX(1.2341);">-</span>
<span class="t" style="font-size:16px;color:#000;left:125.63px;top:245px;transform-origin:0 50%;transform:scaleX(0.9901);">Replace</span>
<span class="t" style="font-size:16px;color:#000;left:188.33px;top:245px;transform-origin:0 50%;transform:scaleX(1.0883);">with</span>
<span class="t" style="font-size:16px;color:#000;left:223.86px;top:245px;transform-origin:0 50%;transform:scaleX(1.0069);">your</span>
<span class="t" style="font-size:16px;color:#000;left:261.21px;top:245px;transform-origin:0 50%;transform:scaleX(1.0825);">data]</span>
<span class="t" style="font-size:16px;color:#000;left:304.24px;top:245px;transform-origin:0 50%;transform:scaleX(0.9983);">Access Management</span>
<span class="t" style="font-size:16px;color:#000;left:544.99px;top:245px;transform-origin:0 50%;transform:scaleX(0.9747);">15</span>
<span class="t" style="font-size:16px;color:#000;left:720.24px;top:245px;transform-origin:0 50%;transform:scaleX(1.0341);">42</span>
<span class="t" style="font-size:16px;color:#000;left:850.66px;top:245px;transform-origin:0 50%;transform:scaleX(1.0208);">2.80</span>
<span class="t" style="font-size:16px;color:#000;left:999.51px;top:245px;transform-origin:0 50%;transform:scaleX(1.1126);">Initial</span>
<span class="t" style="font-size:16px;color:#000;left:1157.95px;top:245px;transform-origin:0 50%;transform:scaleX(0.8904);">RED</span>
<span class="t" style="font-size:16px;color:#000;left:1280.47px;top:245px;transform-origin:0 50%;transform:scaleX(1.0651);">Integrate</span>
<span class="t" style="font-size:16px;color:#000;left:1351.34px;top:245px;transform-origin:0 50%;transform:scaleX(1.1096);">IAM</span>
<span class="t" style="font-size:16px;color:#000;left:1385.97px;top:245px;transform-origin:0 50%;transform:scaleX(1.1238);">with</span>
<span class="t" style="font-size:16px;color:#000;left:1422.40px;top:245px;transform-origin:0 50%;transform:scaleX(1.0226);">Active</span>
<span class="t" style="font-size:16px;color:#000;left:1470.50px;top:245px;transform-origin:0 50%;transform:scaleX(1.0583);">Directory</span>
<span class="t" style="font-size:16px;color:#000;left:1542.41px;top:245px;transform-origin:0 50%;transform:scaleX(1.0412);">and</span>
<span class="t" style="font-size:16px;color:#000;left:1573.59px;top:245px;transform-origin:0 50%;transform:scaleX(1.0499);">implement</span>
<span class="t" style="font-size:16px;color:#000;left:1655.45px;top:245px;transform-origin:0 50%;transform:scaleX(0.9168);">RBAC</span>
<span class="t" style="font-size:16px;color:#000;left:1699.95px;top:245px;transform-origin:0 50%;transform:scaleX(1.0478);">in</span>
<span class="t" style="font-size:16px;color:#000;left:1716.58px;top:245px;transform-origin:0 50%;transform:scaleX(0.9968);">SailPoint</span>
<span class="t" style="font-size:16px;color:#000;left:37.37px;top:278px;transform-origin:0 50%;transform:scaleX(0.9267);">[EXAMPLE</span>
<span class="t" style="font-size:16px;color:#000;left:115.08px;top:278px;transform-origin:0 50%;transform:scaleX(1.2341);">-</span>
<span class="t" style="font-size:16px;color:#000;left:125.63px;top:278px;transform-origin:0 50%;transform:scaleX(0.9901);">Replace</span>
<span class="t" style="font-size:16px;color:#000;left:188.33px;top:278px;transform-origin:0 50%;transform:scaleX(1.0883);">with</span>
<span class="t" style="font-size:16px;color:#000;left:223.86px;top:278px;transform-origin:0 50%;transform:scaleX(1.0069);">your</span>
<span class="t" style="font-size:16px;color:#000;left:261.21px;top:278px;transform-origin:0 50%;transform:scaleX(1.0825);">data]</span>
<span class="t" style="font-size:16px;color:#000;left:303.63px;top:278px;transform-origin:0 50%;transform:scaleX(0.9706);">Service Desk</span>
<span class="t" style="font-size:16px;color:#000;left:544.99px;top:278px;transform-origin:0 50%;transform:scaleX(0.9747);">15</span>
<span class="t" style="font-size:16px;color:#000;left:719.43px;top:278px;transform-origin:0 50%;transform:scaleX(1.0387);">60</span>
<span class="t" style="font-size:16px;color:#000;left:851.45px;top:278px;transform-origin:0 50%;transform:scaleX(0.9949);">4.00</span>
<span class="t" style="font-size:16px;color:#000;left:999.66px;top:278px;transform-origin:0 50%;transform:scaleX(1.0511);">Defined</span>
<span class="t" style="font-size:16px;color:#000;left:1157.76px;top:278px;transform-origin:0 50%;transform:scaleX(0.8986);">GREEN</span>
<span class="t" style="font-size:16px;color:#000;left:1280.64px;top:278px;transform-origin:0 50%;transform:scaleX(0.9915);">Expand</span>
<span class="t" style="font-size:16px;color:#000;left:1337.99px;top:278px;transform-origin:0 50%;transform:scaleX(1.0184);">self-service</span>
<span class="t" style="font-size:16px;color:#000;left:1424.32px;top:278px;transform-origin:0 50%;transform:scaleX(1.1270);">portal</span>
<span class="t" style="font-size:16px;color:#000;left:1472.53px;top:278px;transform-origin:0 50%;transform:scaleX(1.0790);">adoption</span>
<span class="t" style="font-size:16px;color:#000;left:1542.39px;top:278px;transform-origin:0 50%;transform:scaleX(1.0071);">using</span>
<span class="t" style="font-size:16px;color:#000;left:1583.91px;top:278px;transform-origin:0 50%;transform:scaleX(0.9839);">Freshservice</span>
<span class="t" style="font-size:14.2px;color:#000;font-weight:bold;left:405.99px;top:371px;transform-origin:0 50%;transform:scaleX(0.9788);">Scorecard</span>
<span class="t" style="font-size:14.2px;color:#000;font-weight:bold;left:478.95px;top:371px;transform-origin:0 50%;transform:scaleX(0.8636);">—</span>
<span class="t" style="font-size:14.2px;color:#000;font-weight:bold;left:496.10px;top:371px;transform-origin:0 50%;transform:scaleX(0.9689);">Score</span>
<span class="t" style="font-size:14.2px;color:#000;font-weight:bold;left:539.17px;top:371px;transform-origin:0 50%;transform:scaleX(1.0370);">Overview</span>
<span class="t" style="font-size:14.2px;color:#000;font-weight:bold;left:69.6px;top:650.2px;transform-origin:0 0;transform:rotate(-90deg) scaleX(1.0255) translateY(-11px);">Score (1-5)</span>
<span class="t" style="font-size:16px;color:#000;left:669.65px;top:445px;transform-origin:0 50%;transform:scaleX(0.8516);">[EXAMPLE</span>
<span class="t" style="font-size:16px;color:#000;left:741.56px;top:445px;transform-origin:0 50%;transform:scaleX(1.1536);">-</span>
<span class="t" style="font-size:16px;color:#000;left:751.44px;top:445px;transform-origin:0 50%;transform:scaleX(0.9002);">Replace</span>
<span class="t" style="font-size:16px;color:#000;left:808.93px;top:445px;transform-origin:0 50%;transform:scaleX(1.0556);">with</span>
<span class="t" style="font-size:16px;color:#000;left:842.98px;top:445px;transform-origin:0 50%;transform:scaleX(0.9546);">your</span>
<span class="t" style="font-size:16px;color:#000;left:877.86px;top:445px;transform-origin:0 50%;transform:scaleX(0.9664);">data]</span>
<span class="t" style="font-size:16px;color:#000;left:669.03px;top:465px;transform-origin:0 50%;transform:scaleX(0.9730);">Incident Management</span>
<span class="t" style="font-size:16px;color:#000;left:669.65px;top:495px;transform-origin:0 50%;transform:scaleX(0.8516);">[EXAMPLE</span>
<span class="t" style="font-size:16px;color:#000;left:741.56px;top:495px;transform-origin:0 50%;transform:scaleX(1.1536);">-</span>
<span class="t" style="font-size:16px;color:#000;left:751.44px;top:495px;transform-origin:0 50%;transform:scaleX(0.9002);">Replace</span>
<span class="t" style="font-size:16px;color:#000;left:808.93px;top:495px;transform-origin:0 50%;transform:scaleX(1.0556);">with</span>
<span class="t" style="font-size:16px;color:#000;left:842.98px;top:495px;transform-origin:0 50%;transform:scaleX(0.9546);">your</span>
<span class="t" style="font-size:16px;color:#000;left:877.86px;top:495px;transform-origin:0 50%;transform:scaleX(0.9664);">data]</span>
<span class="t" style="font-size:16px;color:#000;left:669.11px;top:515px;transform-origin:0 50%;transform:scaleX(0.9682);">Problem Management</span>
<span class="t" style="font-size:16px;color:#000;left:669.65px;top:546px;transform-origin:0 50%;transform:scaleX(0.8516);">[EXAMPLE</span>
<span class="t" style="font-size:16px;color:#000;left:741.56px;top:546px;transform-origin:0 50%;transform:scaleX(1.1536);">-</span>
<span class="t" style="font-size:16px;color:#000;left:751.44px;top:546px;transform-origin:0 50%;transform:scaleX(0.9002);">Replace</span>
<span class="t" style="font-size:16px;color:#000;left:808.93px;top:546px;transform-origin:0 50%;transform:scaleX(1.0556);">with</span>
<span class="t" style="font-size:16px;color:#000;left:842.98px;top:546px;transform-origin:0 50%;transform:scaleX(0.9546);">your</span>
<span class="t" style="font-size:16px;color:#000;left:877.86px;top:546px;transform-origin:0 50%;transform:scaleX(0.9664);">data]</span>
<span class="t" style="font-size:16px;color:#000;left:668.71px;top:566px;transform-origin:0 50%;transform:scaleX(0.9485);">Change Management</span>
<span class="t" style="font-size:16px;color:#000;left:669.65px;top:596px;transform-origin:0 50%;transform:scaleX(0.8516);">[EXAMPLE</span>
<span class="t" style="font-size:16px;color:#000;left:741.56px;top:596px;transform-origin:0 50%;transform:scaleX(1.1536);">-</span>
<span class="t" style="font-size:16px;color:#000;left:751.44px;top:596px;transform-origin:0 50%;transform:scaleX(0.9002);">Replace</span>
<span class="t" style="font-size:16px;color:#000;left:808.93px;top:596px;transform-origin:0 50%;transform:scaleX(1.0556);">with</span>
<span class="t" style="font-size:16px;color:#000;left:842.98px;top:596px;transform-origin:0 50%;transform:scaleX(0.9546);">your</span>
<span class="t" style="font-size:16px;color:#000;left:877.86px;top:596px;transform-origin:0 50%;transform:scaleX(0.9664);">data]</span>
<span class="t" style="font-size:16px;color:#000;left:916.09px;top:596px;transform-origin:0 50%;transform:scaleX(0.9461);">Event</span>
<span class="t" style="font-size:16px;color:#000;left:669.11px;top:616px;transform-origin:0 50%;transform:scaleX(0.9710);">Management</span>
<span class="t" style="font-size:16px;color:#000;left:669.65px;top:646px;transform-origin:0 50%;transform:scaleX(0.8516);">[EXAMPLE</span>
<span class="t" style="font-size:16px;color:#000;left:741.56px;top:646px;transform-origin:0 50%;transform:scaleX(1.1536);">-</span>
<span class="t" style="font-size:16px;color:#000;left:751.44px;top:646px;transform-origin:0 50%;transform:scaleX(0.9002);">Replace</span>
<span class="t" style="font-size:16px;color:#000;left:808.93px;top:646px;transform-origin:0 50%;transform:scaleX(1.0556);">with</span>
<span class="t" style="font-size:16px;color:#000;left:842.98px;top:646px;transform-origin:0 50%;transform:scaleX(0.9546);">your</span>
<span class="t" style="font-size:16px;color:#000;left:877.86px;top:646px;transform-origin:0 50%;transform:scaleX(0.9664);">data]</span>
<span class="t" style="font-size:16px;color:#000;left:669.11px;top:666px;transform-origin:0 50%;transform:scaleX(0.9640);">Request Fulfillment</span>
<span class="t" style="font-size:16px;color:#000;left:669.65px;top:696px;transform-origin:0 50%;transform:scaleX(0.8516);">[EXAMPLE</span>
<span class="t" style="font-size:16px;color:#000;left:741.56px;top:696px;transform-origin:0 50%;transform:scaleX(1.1536);">-</span>
<span class="t" style="font-size:16px;color:#000;left:751.44px;top:696px;transform-origin:0 50%;transform:scaleX(0.9002);">Replace</span>
<span class="t" style="font-size:16px;color:#000;left:808.93px;top:696px;transform-origin:0 50%;transform:scaleX(1.0556);">with</span>
<span class="t" style="font-size:16px;color:#000;left:842.98px;top:696px;transform-origin:0 50%;transform:scaleX(0.9546);">your</span>
<span class="t" style="font-size:16px;color:#000;left:877.86px;top:696px;transform-origin:0 50%;transform:scaleX(0.9664);">data]</span>
<span class="t" style="font-size:16px;color:#000;left:916.66px;top:696px;transform-origin:0 50%;transform:scaleX(0.8589);">Access</span>
<span class="t" style="font-size:16px;color:#000;left:669.11px;top:716px;transform-origin:0 50%;transform:scaleX(0.9710);">Management</span>
<span class="t" style="font-size:16px;color:#000;left:669.65px;top:747px;transform-origin:0 50%;transform:scaleX(0.8516);">[EXAMPLE</span>
<span class="t" style="font-size:16px;color:#000;left:741.56px;top:747px;transform-origin:0 50%;transform:scaleX(1.1536);">-</span>
<span class="t" style="font-size:16px;color:#000;left:751.44px;top:747px;transform-origin:0 50%;transform:scaleX(0.9002);">Replace</span>
<span class="t" style="font-size:16px;color:#000;left:808.93px;top:747px;transform-origin:0 50%;transform:scaleX(1.0556);">with</span>
<span class="t" style="font-size:16px;color:#000;left:842.98px;top:747px;transform-origin:0 50%;transform:scaleX(0.9546);">your</span>
<span class="t" style="font-size:16px;color:#000;left:877.86px;top:747px;transform-origin:0 50%;transform:scaleX(0.9664);">data]</span>
<span class="t" style="font-size:16px;color:#000;left:668.71px;top:767px;transform-origin:0 50%;transform:scaleX(0.9049);">Service Desk</span>
<span class="t" style="font-size:18px;color:#fff;left:125.60px;top:911px;transform-origin:0 50%;transform:scaleX(0.9770);">Instructions</span>
<span class="t" style="font-size:17.6px;color:#217346;font-weight:bold;left:240.55px;top:912px;transform-origin:0 50%;transform:scaleX(0.9286);">Scorecard</span>
<span class="t" style="font-size:18px;color:#fff;left:349.73px;top:911px;transform-origin:0 50%;transform:scaleX(0.9532);">Improvement_Priorities</span>
<span class="t" style="font-size:18px;color:#fff;left:560.28px;top:911px;transform-origin:0 50%;transform:scaleX(0.8922);">Pro_Tips_and_Mistakes</span>
<span class="t" style="font-size:12.6px;color:#333;left:13.49px;top:947px;transform-origin:0 50%;transform:scaleX(1.0177);">Ready</span>
<span class="t" style="font-size:12.6px;color:#222;font-weight:bold;left:138.63px;top:947px;transform-origin:0 50%;transform:scaleX(1.0100);">Accessibility: Investigate</span>
<span class="t" style="font-size:13.0px;color:#333;left:1429.82px;top:946px;transform-origin:0 50%;transform:scaleX(0.9885);">Display Settings</span>
<span class="t" style="font-size:12.6px;color:#555;left:1877.16px;top:947px;transform-origin:0 50%;transform:scaleX(0.9783);">100%</span>
<div style="left:520px;top:50px;width:20px;height:21px;background:linear-gradient(#ffffff,#fbfbfd 45%,#eef0f5);box-sizing:border-box;border:1px solid #c3c6cc;border-bottom-color:#a9adb6;border-right-color:#b4b8c0;"></div>
<svg style="left:526px;top:58px" width="9" height="6" viewBox="0 0 9 6"><path d="M0.6 1 H8.4 L4.5 5.3 Z" fill="#666"/></svg>
<div style="left:695px;top:50px;width:21px;height:21px;background:linear-gradient(#ffffff,#fbfbfd 45%,#eef0f5);box-sizing:border-box;border:1px solid #c3c6cc;border-bottom-color:#a9adb6;border-right-color:#b4b8c0;"></div>
<svg style="left:701px;top:58px" width="9" height="6" viewBox="0 0 9 6"><path d="M0.6 1 H8.4 L4.5 5.3 Z" fill="#666"/></svg>
<div style="left:826px;top:50px;width:21px;height:21px;background:linear-gradient(#ffffff,#fbfbfd 45%,#eef0f5);box-sizing:border-box;border:1px solid #c3c6cc;border-bottom-color:#a9adb6;border-right-color:#b4b8c0;"></div>
<svg style="left:832px;top:58px" width="9" height="6" viewBox="0 0 9 6"><path d="M0.6 1 H8.4 L4.5 5.3 Z" fill="#666"/></svg>
<div style="left:975px;top:50px;width:21px;height:21px;background:linear-gradient(#ffffff,#fbfbfd 45%,#eef0f5);box-sizing:border-box;border:1px solid #c3c6cc;border-bottom-color:#a9adb6;border-right-color:#b4b8c0;"></div>
<svg style="left:981px;top:58px" width="9" height="6" viewBox="0 0 9 6"><path d="M0.6 1 H8.4 L4.5 5.3 Z" fill="#666"/></svg>
<div style="left:1133px;top:50px;width:21px;height:21px;background:linear-gradient(#ffffff,#fbfbfd 45%,#eef0f5);box-sizing:border-box;border:1px solid #c3c6cc;border-bottom-color:#a9adb6;border-right-color:#b4b8c0;"></div>
<svg style="left:1139px;top:58px" width="9" height="6" viewBox="0 0 9 6"><path d="M0.6 1 H8.4 L4.5 5.3 Z" fill="#666"/></svg>
<div style="left:1256px;top:50px;width:21px;height:21px;background:linear-gradient(#ffffff,#fbfbfd 45%,#eef0f5);box-sizing:border-box;border:1px solid #c3c6cc;border-bottom-color:#a9adb6;border-right-color:#b4b8c0;"></div>
<svg style="left:1262px;top:58px" width="9" height="6" viewBox="0 0 9 6"><path d="M0.6 1 H8.4 L4.5 5.3 Z" fill="#666"/></svg>
<div style="left:1825px;top:50px;width:21px;height:21px;background:linear-gradient(#ffffff,#fbfbfd 45%,#eef0f5);box-sizing:border-box;border:1px solid #c3c6cc;border-bottom-color:#a9adb6;border-right-color:#b4b8c0;"></div>
<svg style="left:1831px;top:58px" width="9" height="6" viewBox="0 0 9 6"><path d="M0.6 1 H8.4 L4.5 5.3 Z" fill="#666"/></svg>
<svg style="left:542px;top:73px" width="8" height="8" viewBox="0 0 8 8"><path d="M0 0 H7.4 L0 7.4 Z" fill="#0c8a12"/></svg>
<svg style="left:717px;top:73px" width="8" height="8" viewBox="0 0 8 8"><path d="M0 0 H7.4 L0 7.4 Z" fill="#0c8a12"/></svg>
<svg style="left:848px;top:73px" width="8" height="8" viewBox="0 0 8 8"><path d="M0 0 H7.4 L0 7.4 Z" fill="#0c8a12"/></svg>
<svg style="left:542px;top:106px" width="8" height="8" viewBox="0 0 8 8"><path d="M0 0 H7.4 L0 7.4 Z" fill="#0c8a12"/></svg>
<svg style="left:717px;top:106px" width="8" height="8" viewBox="0 0 8 8"><path d="M0 0 H7.4 L0 7.4 Z" fill="#0c8a12"/></svg>
<svg style="left:848px;top:106px" width="8" height="8" viewBox="0 0 8 8"><path d="M0 0 H7.4 L0 7.4 Z" fill="#0c8a12"/></svg>
<svg style="left:542px;top:139px" width="8" height="8" viewBox="0 0 8 8"><path d="M0 0 H7.4 L0 7.4 Z" fill="#0c8a12"/></svg>
<svg style="left:717px;top:139px" width="8" height="8" viewBox="0 0 8 8"><path d="M0 0 H7.4 L0 7.4 Z" fill="#0c8a12"/></svg>
<svg style="left:848px;top:139px" width="8" height="8" viewBox="0 0 8 8"><path d="M0 0 H7.4 L0 7.4 Z" fill="#0c8a12"/></svg>
<svg style="left:542px;top:172px" width="8" height="8" viewBox="0 0 8 8"><path d="M0 0 H7.4 L0 7.4 Z" fill="#0c8a12"/></svg>
<svg style="left:717px;top:172px" width="8" height="8" viewBox="0 0 8 8"><path d="M0 0 H7.4 L0 7.4 Z" fill="#0c8a12"/></svg>
<svg style="left:848px;top:172px" width="8" height="8" viewBox="0 0 8 8"><path d="M0 0 H7.4 L0 7.4 Z" fill="#0c8a12"/></svg>
<svg style="left:542px;top:205px" width="8" height="8" viewBox="0 0 8 8"><path d="M0 0 H7.4 L0 7.4 Z" fill="#0c8a12"/></svg>
<svg style="left:717px;top:205px" width="8" height="8" viewBox="0 0 8 8"><path d="M0 0 H7.4 L0 7.4 Z" fill="#0c8a12"/></svg>
<svg style="left:848px;top:205px" width="8" height="8" viewBox="0 0 8 8"><path d="M0 0 H7.4 L0 7.4 Z" fill="#0c8a12"/></svg>
<svg style="left:542px;top:238px" width="8" height="8" viewBox="0 0 8 8"><path d="M0 0 H7.4 L0 7.4 Z" fill="#0c8a12"/></svg>
<svg style="left:717px;top:238px" width="8" height="8" viewBox="0 0 8 8"><path d="M0 0 H7.4 L0 7.4 Z" fill="#0c8a12"/></svg>
<svg style="left:848px;top:238px" width="8" height="8" viewBox="0 0 8 8"><path d="M0 0 H7.4 L0 7.4 Z" fill="#0c8a12"/></svg>
<svg style="left:542px;top:271px" width="8" height="8" viewBox="0 0 8 8"><path d="M0 0 H7.4 L0 7.4 Z" fill="#0c8a12"/></svg>
<svg style="left:717px;top:271px" width="8" height="8" viewBox="0 0 8 8"><path d="M0 0 H7.4 L0 7.4 Z" fill="#0c8a12"/></svg>
<svg style="left:848px;top:271px" width="8" height="8" viewBox="0 0 8 8"><path d="M0 0 H7.4 L0 7.4 Z" fill="#0c8a12"/></svg>
</body></html>
